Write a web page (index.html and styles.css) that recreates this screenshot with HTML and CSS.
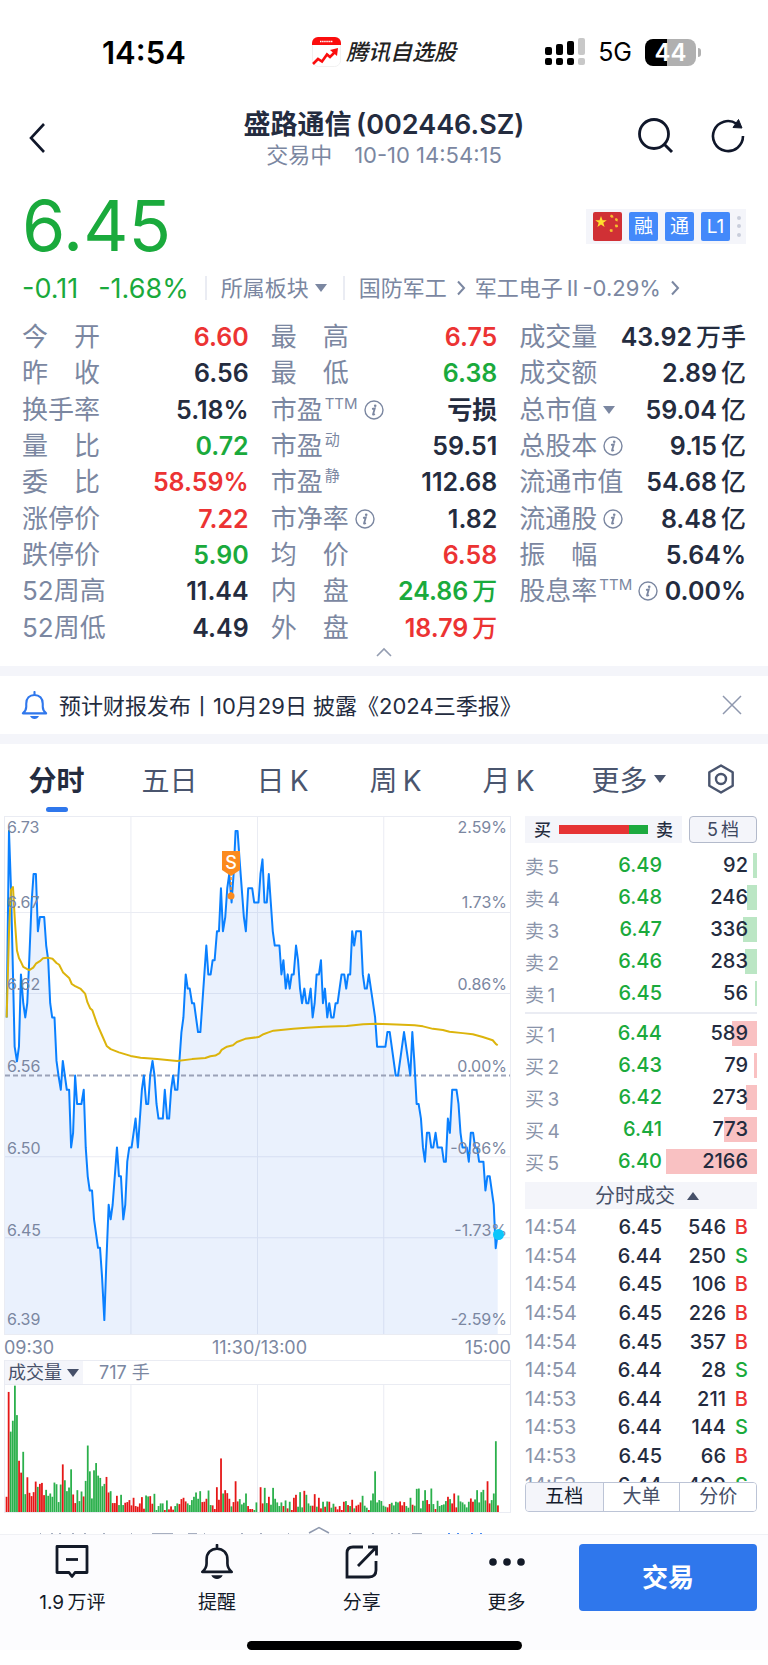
FILE: index.html
```html
<!DOCTYPE html>
<html lang="zh-CN">
<head>
<meta charset="utf-8">
<meta name="viewport" content="width=device-width, initial-scale=1">
<title>盛路通信 (002446.SZ)</title>
<link rel="stylesheet" href="styles.css">
</head>
<body>
<svg class="defs" aria-hidden="true">
  <symbol id="info" viewBox="0 0 20 20"><circle cx="10" cy="10" r="9" fill="none" stroke="currentColor" stroke-width="1.4"/><circle cx="11.2" cy="5.8" r="1.3" fill="currentColor"/><path d="M8 8.8l2.8-.5-1.8 6.2q-.1.6 1.9-.6" fill="none" stroke="currentColor" stroke-width="1.8"/></symbol>
  <symbol id="chev" viewBox="0 0 10 16"><path d="M2 1.500l6 6.500-6 6.500" fill="none" stroke="currentColor" stroke-width="2"/></symbol>
  <symbol id="bell" viewBox="0 0 36 38"><path d="M18 1v4M2.500 29.500h31c-3.500-3.200-4.500-5-4.500-9v-4c0-7-4.500-11.500-11-11.500S7 9.500 7 16.500v4c0 4-1 5.800-4.500 9z" fill="none" stroke="currentColor" stroke-width="2.800" stroke-linejoin="round" stroke-linecap="round"/><path d="M12 33h12q-2 4-6 4t-6-4z" fill="currentColor"/></symbol>
</svg>

<header class="status">
  <span class="clock">14:54</span>
  <span class="island">
    <svg width="29" height="30" viewBox="0 0 29 30" aria-hidden="true"><rect x=".5" y=".5" width="28" height="29" rx="6" fill="#fff" stroke="#f1f1f1"/><path d="M0 8V6a6 6 0 0 1 6-6h17a6 6 0 0 1 6 6v2z" fill="#fb0d0d"/><path d="M8 4.500h13" stroke="#fff" stroke-width="1.500" stroke-dasharray="1.500 .6"/><path d="M1 27l5-5 4 2.500 5-7 3 2.500 6-6" fill="none" stroke="#fb0d0d" stroke-width="2.600"/><path d="M18 13l8-2-1 8z" fill="#fb0d0d"/></svg>
    <span class="island-name">腾讯自选股</span>
  </span>
  <span class="radio">
    <svg width="40" height="28" viewBox="0 0 40 28" aria-hidden="true"><g fill="#000"><rect x="0" y="9" width="7" height="8" rx="2"/><rect x="11" y="6" width="7" height="11" rx="2"/><rect x="22" y="3" width="7" height="14" rx="2"/><rect x="0" y="20" width="7" height="7" rx="2"/><rect x="11" y="20" width="7" height="7" rx="2"/><rect x="22" y="20" width="7" height="7" rx="2"/></g><g fill="#c8c8c8"><rect x="33" y="0" width="7" height="17" rx="2"/><rect x="33" y="20" width="7" height="7" rx="2"/></g></svg>
    <span class="net">5G</span>
    <span class="battery">44</span>
  </span>
</header>

<nav class="titlebar">
  <button class="plain back" aria-label="返回"><svg width="18" height="32" viewBox="0 0 18 32"><path d="M16 2L3 16l13 14" fill="none" stroke="currentColor" stroke-width="2.600"/></svg></button>
  <div class="heading"><h1>盛路通信&thinsp;(002446.SZ)</h1><p>交易中&emsp;10-10 14:54:15</p></div>
  <div class="tools">
    <button class="plain" aria-label="搜索"><svg width="36" height="36" viewBox="0 0 36 36"><circle cx="16" cy="16" r="14.500" fill="none" stroke="currentColor" stroke-width="2.800"/><path d="M26 26l8 8" stroke="currentColor" stroke-width="3"/></svg></button>
    <button class="plain" aria-label="刷新"><svg width="36" height="36" viewBox="0 0 36 36"><path d="M33 18a15 15 0 1 1-6.500-12.300" fill="none" stroke="currentColor" stroke-width="2.600"/><path d="M28.500 1.500l3.500 8.500-9-.5z" fill="currentColor" stroke="currentColor"/></svg></button>
  </div>
</nav>

<main>
<section class="quote">
  <strong class="price">6.45</strong>
  <div class="badges">
    <svg width="29" height="29" viewBox="0 0 29 29" role="img" aria-label="中国"><rect width="29" height="29" rx="2" fill="#d03035"/><path d="M8 4l1.500 4.200h4.300l-3.500 2.600 1.300 4.200L8 12.400 4.400 15l1.300-4.200-3.500-2.600h4.300z" fill="#ffdf2e"/><g fill="#f5c02c"><path d="M18 2.500l2 1 .5 2-2.200.2-1.300-1.500zM23 6l1.800 1-.3 2.400-2-.6-.6-1.700zM22.500 12.500l2.200.2.3 2.300-2.200.5-1-1.700zM17.500 17l2.200.6-.3 2.300-2.300-.2-.5-1.700z"/></g></svg>
    <span class="badge">融</span><span class="badge">通</span><span class="badge">L1</span>
    <svg width="4" height="23" viewBox="0 0 4 23" aria-hidden="true"><g fill="#c9cedb"><circle cx="2" cy="3" r="2"/><circle cx="2" cy="11" r="2"/><circle cx="2" cy="20" r="2"/></g></svg>
  </div>
</section>
<section class="sector">
  <span class="chg">-0.11</span><span class="chg pct">-1.68%</span>
  <button class="plain cell">所属板块<i class="tri"></i></button>
  <div class="cell links"><a href="#a">国防军工</a><svg width="10" height="16"><use href="#chev"/></svg><a href="#b">军工电子&thinsp;II&thinsp;-0.29%</a><svg width="10" height="16"><use href="#chev"/></svg></div>
</section>

<section class="stats">
  <dl>
    <div><dt>今　开</dt><dd class="r">6.60</dd></div>
    <div><dt>昨　收</dt><dd>6.56</dd></div>
    <div><dt>换手率</dt><dd>5.18%</dd></div>
    <div><dt>量　比</dt><dd class="g">0.72</dd></div>
    <div><dt>委　比</dt><dd class="r">58.59%</dd></div>
    <div><dt>涨停价</dt><dd class="r">7.22</dd></div>
    <div><dt>跌停价</dt><dd class="g">5.90</dd></div>
    <div><dt>52周高</dt><dd>11.44</dd></div>
    <div><dt>52周低</dt><dd>4.49</dd></div>
  </dl>
  <dl>
    <div><dt>最　高</dt><dd class="r">6.75</dd></div>
    <div><dt>最　低</dt><dd class="g">6.38</dd></div>
    <div><dt>市盈<sup>TTM</sup><svg class="info"><use href="#info"/></svg></dt><dd>亏损</dd></div>
    <div><dt>市盈<sup>动</sup></dt><dd>59.51</dd></div>
    <div><dt>市盈<sup>静</sup></dt><dd>112.68</dd></div>
    <div><dt>市净率<svg class="info"><use href="#info"/></svg></dt><dd>1.82</dd></div>
    <div><dt>均　价</dt><dd class="r">6.58</dd></div>
    <div><dt>内　盘</dt><dd class="g">24.86<b>万</b></dd></div>
    <div><dt>外　盘</dt><dd class="r">18.79<b>万</b></dd></div>
  </dl>
  <dl>
    <div><dt>成交量</dt><dd>43.92<b>万手</b></dd></div>
    <div><dt>成交额</dt><dd>2.89<b>亿</b></dd></div>
    <div><dt>总市值<i class="tri"></i></dt><dd>59.04<b>亿</b></dd></div>
    <div><dt>总股本<svg class="info"><use href="#info"/></svg></dt><dd>9.15<b>亿</b></dd></div>
    <div><dt>流通市值</dt><dd>54.68<b>亿</b></dd></div>
    <div><dt>流通股<svg class="info"><use href="#info"/></svg></dt><dd>8.48<b>亿</b></dd></div>
    <div><dt>振　幅</dt><dd>5.64%</dd></div>
    <div><dt>股息率<sup>TTM</sup><svg class="info"><use href="#info"/></svg></dt><dd>0.00%</dd></div>
  </dl>
</section>
<button class="plain fold" aria-label="收起"><svg width="16" height="10" viewBox="0 0 16 10"><path d="M1 9l7-7 7 7" fill="none" stroke="currentColor" stroke-width="1.600"/></svg></button>

<section class="notice">
  <svg class="notice-bell" width="27" height="29"><use href="#bell"/></svg>
  <p>预计财报发布丨10月29日 披露《2024三季报》</p>
  <button class="plain" aria-label="关闭"><svg width="20" height="20" viewBox="0 0 20 20"><path d="M1 1l18 18M19 1L1 19" stroke="currentColor" stroke-width="1.500"/></svg></button>
</section>

<nav class="tabs">
  <button class="plain on">分时</button>
  <button class="plain">五日</button>
  <button class="plain">日&thinsp;K</button>
  <button class="plain">周&thinsp;K</button>
  <button class="plain">月&thinsp;K</button>
  <button class="plain">更多<i class="tri"></i></button>
  <button class="plain" aria-label="设置"><svg width="30" height="30" viewBox="0 0 30 30"><path d="M15 1.500l11.700 6.700v13.600L15 28.500 3.300 21.800V8.200z" fill="none" stroke="currentColor" stroke-width="2.400" stroke-linejoin="round"/><circle cx="15" cy="15" r="5" fill="none" stroke="currentColor" stroke-width="2.400"/></svg></button>
</nav>

<div class="board">
  <section class="charts">
    <div class="plot">
      <svg class="lines" viewBox="12 45 1520 1452" preserveAspectRatio="none" aria-label="分时走势">
        <path class="grid" d="M12 313H1532M12 541H1532M12 999H1532M12 1227H1532M391 45V1497M772 45V1497M1152 45V1497"/>
        <path class="area" id="area"/>
        <path class="dash" d="M12 771H1532"/>
        <polyline class="now" id="now" points="17,608 24,84 30,245 35,446 41,690 48,731 54,690 60,487 67,568 73,608 79,568 85,446 92,285 98,205 105,205 111,366 117,326 130,326 136,406 142,446 148,568 154,608 161,608 167,730 173,771 180,811 186,730 198,811 205,811 211,973 217,932 223,771 229,851 242,851 249,811 255,973 261,1054 267,1094 274,1094 280,1175 292,1255 298,1255 304,1335 311,1458 317,1297 324,1134 330,1175 336,1134 349,973 355,1054 361,1054 368,1175 374,1134 380,1013 386,973 393,973 405,892 412,973 424,811 430,771 437,851 443,851 449,771 456,730 462,771 468,851 474,892 487,892 493,811 500,892 506,892 512,811 518,771 524,811 531,811 537,730 543,650 549,608 556,487 562,527 568,527 575,568 581,568 593,649 600,649 612,487 618,406 624,487 631,487 637,447 643,447 650,366 656,366 662,245 668,366 675,326 681,245 687,205 694,285 700,205 706,84 712,84 718,164 731,326 737,366 744,245 756,245 762,285 775,285 781,205 787,164 793,285 800,285 806,205 812,285 818,366 824,406 838,406 844,487 850,447 857,527 863,487 869,527 875,487 881,487 888,406 894,447 900,527 906,568 913,527 919,568 925,568 932,527 938,608 944,568 950,487 957,487 963,447 969,568 975,527 982,608 988,568 994,608 1001,608 1007,568 1013,568 1025,487 1033,487 1039,527 1045,487 1051,487 1057,366 1063,406 1069,366 1083,366 1089,487 1095,527 1101,527 1107,487 1126,608 1132,690 1157,690 1163,649 1170,649 1188,771 1195,771 1213,649 1232,771 1238,649 1244,730 1251,851 1257,851 1264,892 1270,973 1276,1013 1282,932 1289,932 1295,973 1301,973 1308,932 1314,973 1327,973 1333,1013 1339,1013 1345,892 1351,932 1358,811 1371,811 1377,851 1383,932 1389,973 1402,973 1408,1013 1414,932 1421,932 1427,973 1433,973 1439,1013 1452,1013 1458,1094 1464,1054 1471,1054 1483,1134 1489,1256 1495,1215"/>
        <polyline class="avg" points="17,608 24,370 30,250 36,242 42,340 48,420 54,441 60,452 67,466 79,472 85,475 97,468 105,457 117,450 126,442 140,440 155,443 167,455 175,460 187,482 205,497 213,514 223,520 240,528 253,541 260,565 268,582 275,588 290,628 305,660 318,688 330,697 355,706 390,716 420,721 470,725 530,730 575,725 615,722 630,717 645,715 658,708 664,699 680,690 698,686 710,677 735,668 775,663 790,655 805,650 820,645 880,640 920,637 970,634 1040,632 1090,627 1130,626 1190,628 1245,630 1270,633 1300,640 1330,643 1350,648 1390,652 1420,655 1450,663 1480,672 1490,683 1495,686"/>
      </svg>
      <div class="scale">
        <div><span>6.73</span><span>2.59%</span></div>
        <div><span>6.67</span><span>1.73%</span></div>
        <div><span>6.62</span><span>0.86%</span></div>
        <div><span>6.56</span><span>0.00%</span></div>
        <div><span>6.50</span><span>-0.86%</span></div>
        <div><span>6.45</span><span>-1.73%</span></div>
        <div><span>6.39</span><span>-2.59%</span></div>
      </div>
      <svg class="sell" width="18" height="50" viewBox="0 0 18 50"><path d="M0 0h18v19l-9 6-9-6z" fill="#fb8a1e"/><text x="9" y="18" text-anchor="middle">S</text><path d="M9 26v16" stroke="#fb8a1e" stroke-width="1.500" stroke-dasharray="3 2"/><circle cx="9" cy="45" r="3.500" fill="#fb8a1e"/></svg>
      <i class="last"></i>
    </div>
    <div class="times"><span>09:30</span><span>11:30/13:00</span><span>15:00</span></div>
    <div class="vol-head"><button class="plain">成交量<i class="tri"></i></button><span>717 手</span></div>
    <svg class="volume" id="volume" viewBox="12 103 1520 384" preserveAspectRatio="none" aria-label="成交量"><path class="grid" d="M391 103V487M772 103V487M1152 103V487"/></svg>
  </section>

  <aside class="depth">
    <div class="depth-head">
      <div class="ratio"><span>买</span><i class="meter"></i><span>卖</span></div>
      <button class="level">5&thinsp;档</button>
    </div>
    <table class="book asks">
      <tr><th scope="row">卖&thinsp;5</th><td>6.49</td><td><i style="width:4px"></i><span>92</span></td></tr>
      <tr><th scope="row">卖&thinsp;4</th><td>6.48</td><td><i style="width:10px"></i><span>246</span></td></tr>
      <tr><th scope="row">卖&thinsp;3</th><td>6.47</td><td><i style="width:14px"></i><span>336</span></td></tr>
      <tr><th scope="row">卖&thinsp;2</th><td>6.46</td><td><i style="width:12px"></i><span>283</span></td></tr>
      <tr><th scope="row">卖&thinsp;1</th><td>6.45</td><td><i style="width:2px"></i><span>56</span></td></tr>
    </table>
    <hr class="split">
    <table class="book bids">
      <tr><th scope="row">买&thinsp;1</th><td>6.44</td><td><i style="width:25px"></i><span>589</span></td></tr>
      <tr><th scope="row">买&thinsp;2</th><td>6.43</td><td><i style="width:3px"></i><span>79</span></td></tr>
      <tr><th scope="row">买&thinsp;3</th><td>6.42</td><td><i style="width:11px"></i><span>273</span></td></tr>
      <tr><th scope="row">买&thinsp;4</th><td>6.41</td><td><i style="width:33px"></i><span>773</span></td></tr>
      <tr><th scope="row">买&thinsp;5</th><td>6.40</td><td><i style="width:91px"></i><span>2166</span></td></tr>
    </table>
    <button class="plain deals-head">分时成交<i class="tri up"></i></button>
    <div class="deals">
      <table>
        <tr><th scope="row">14:54</th><td>6.45</td><td>546</td><td class="r">B</td></tr>
        <tr><th scope="row">14:54</th><td>6.44</td><td>250</td><td class="g">S</td></tr>
        <tr><th scope="row">14:54</th><td>6.45</td><td>106</td><td class="r">B</td></tr>
        <tr><th scope="row">14:54</th><td>6.45</td><td>226</td><td class="r">B</td></tr>
        <tr><th scope="row">14:54</th><td>6.45</td><td>357</td><td class="r">B</td></tr>
        <tr><th scope="row">14:54</th><td>6.44</td><td>28</td><td class="g">S</td></tr>
        <tr><th scope="row">14:53</th><td>6.44</td><td>211</td><td class="r">B</td></tr>
        <tr><th scope="row">14:53</th><td>6.44</td><td>144</td><td class="g">S</td></tr>
        <tr><th scope="row">14:53</th><td>6.45</td><td>66</td><td class="r">B</td></tr>
        <tr><th scope="row">14:53</th><td>6.44</td><td>400</td><td class="g">S</td></tr>
      </table>
    </div>
    <div class="switch"><button class="on">五档</button><button>大单</button><button>分价</button></div>
  </aside>
</div>
<svg class="peek" width="768" height="12" viewBox="0 0 768 12" aria-hidden="true"><path d="M309 11l10-5.500L329 11" fill="none" stroke="#8f99ae" stroke-width="1.500"/><path d="M40 11.500h1M51 11.500h2M59 11.500h2M72 11.500h2M84 11.500h2M103 11.500h2M131 11.500h1M152 11.500h21M188 11.500h9M204 11.500h1M241 11.500h2M260 11.500h2M288 11.500h1M349 11.500h2M372 11.500h2M391 11.500h2M398 11.500h2M412 11.500h10" stroke="#a7afc0"/><path d="M448 11.500h2M457 11.500h2M471 11.500h2M480 11.500h2" stroke="#4c8df2"/></svg>
</main>

<footer class="dock">
  <div class="actions">
    <button class="plain"><svg width="36" height="36" viewBox="0 0 36 36"><path d="M3 2.500h30v26H21l-3 4-3-4H3z" fill="none" stroke="currentColor" stroke-width="2.800" stroke-linejoin="round"/><path d="M12 15.500h12" stroke="currentColor" stroke-width="2.800"/></svg><span>1.9&thinsp;万评</span></button>
    <button class="plain"><svg width="36" height="36" viewBox="0 0 36 38"><use href="#bell"/></svg>提醒</button>
    <button class="plain"><svg width="36" height="36" viewBox="0 0 36 36"><path d="M19 3H9Q3 3 3 9v24h22q7 0 7-7V17M24 3h8.500v8.500M32 3.500L14 22" fill="none" stroke="currentColor" stroke-width="2.800"/></svg>分享</button>
    <button class="plain"><svg width="36" height="36" viewBox="0 0 36 36"><g fill="currentColor"><circle cx="4" cy="18" r="3.800"/><circle cx="18" cy="18" r="3.800"/><circle cx="32" cy="18" r="3.800"/></g></svg>更多</button>
    <button class="trade">交易</button>
  </div>
  <i class="home"></i>
</footer>
<script src="chart.js"></script>
</body>
</html>
```
FILE: styles.css
```css
* { box-sizing: border-box; }
:root { --ink: #242c3f; --mute: #7b87a1; --soft: #f4f5fa; --line: #eaecf3; --green: #1aaa3c; --red: #ec3333; --blue: #2f77ec; }
body { margin: 0; background: #fff; color: var(--ink); font-family: Inter, "Noto Sans CJK SC", sans-serif; font-size: 18px; }
h1, p, dl, dd { margin: 0; }
a { color: inherit; text-decoration: none; }
button { font-family: inherit; cursor: pointer; }
table { border-collapse: collapse; table-layout: fixed; width: 100%; }
th, td { padding: 0; }
svg { flex: none; display: block; }
.defs { position: absolute; width: 0; height: 0; }
.plain { border: 0; background: none; padding: 0; color: inherit; font-size: inherit; }
.r { color: var(--red); }
.g { color: var(--green); }
.tri { display: inline-block; width: 0; height: 0; border: 6px solid transparent; border-top: 8px solid currentColor; border-bottom: 0; }
.tri.up { border-top: 0; border-bottom: 8px solid currentColor; }

.status { display: grid; grid-template-columns: 1fr auto 1fr; align-items: center; height: 104px; padding: 0 68px; color: #000; }
.clock { margin-left: 34px; font-size: 31px; font-weight: 600; }
.island { display: flex; align-items: center; gap: 5px; }
.island-name { font-size: 22px; font-weight: 500; font-style: italic; color: #222; line-height: 30px; }
.radio { display: flex; align-items: center; justify-content: flex-end; gap: 13px; }
.net { font-size: 25px; }
.battery { position: relative; width: 51px; height: 27px; border-radius: 8px; background: linear-gradient(90deg, #000 44%, #b0b0b0 44%); color: #fff; font-size: 24px; font-weight: 600; line-height: 27px; text-align: center; margin-right: 4px; }
.battery::after { content: ""; position: absolute; right: -5px; top: 9px; width: 3px; height: 9px; border-radius: 0 3px 3px 0; background: #b0b0b0; }

.titlebar { display: grid; grid-template-columns: 1fr auto 1fr; align-items: center; height: 68px; padding: 0 22px 0 28px; color: #10172a; }
.back { justify-self: start; }
.heading { text-align: center; margin-right: 6px; }
.heading h1 { font-size: 27px; line-height: 34px; font-weight: 600; color: var(--ink); }
.heading p { font-size: 22px; line-height: 26px; color: var(--mute); }
.tools { display: flex; justify-content: flex-end; gap: 36px; padding-bottom: 4px; }

.quote { display: flex; align-items: center; justify-content: space-between; height: 96px; padding: 12px 22px 0; }
.price { font-size: 70px; line-height: 84px; font-weight: 400; color: var(--green); }
.badges { display: flex; align-items: center; gap: 7px; padding: 3px 5px 3px 7px; background: var(--soft); }
.badge { width: 29px; height: 29px; border-radius: 2px; background: #4389fa; color: #fff; font-size: 19px; line-height: 29px; text-align: center; }
.sector { display: flex; align-items: center; height: 40px; padding: 0 22px; color: var(--mute); font-size: 22px; white-space: nowrap; }
.chg { color: var(--green); font-size: 27px; }
.pct { margin-left: 20px; }
.cell { display: flex; align-items: center; gap: 6px; border-left: 2px solid var(--line); padding-left: 14px; margin-left: 16px; line-height: 24px; }
.links { gap: 9px; }

.stats { display: grid; grid-template-columns: repeat(3, 1fr); gap: 22px; padding: 11px 22px 0; }
.stats dl { display: grid; grid-template-rows: repeat(9, 1fr); height: 327px; }
.stats dl > div { display: flex; justify-content: space-between; line-height: 36px; white-space: nowrap; }
dt { display: flex; align-items: center; color: var(--mute); font-size: 26px; }
dd { font-size: 25px; font-weight: 600; }
dd b { font-weight: 500; margin-left: 4px; }
dt sup { align-self: flex-start; font-size: 15px; line-height: 24px; margin-left: 2px; }
dt .tri { margin-left: 6px; }
.info { width: 20px; height: 20px; margin-left: 6px; }
.fold { display: flex; justify-content: center; width: 100%; height: 20px; padding-top: 1px; color: #949db1; }

.notice { display: flex; align-items: center; gap: 11px; padding: 0 26px 0 21px; height: 78px; border: solid var(--soft); border-width: 10px 0; font-size: 22px; }
.notice p { flex: 1; padding-bottom: 2px; }
.notice-bell { color: var(--blue); }
.notice button { color: #8f98ae; }

.tabs { display: grid; grid-template-columns: repeat(5, 113fr) 127fr 58fr; height: 72px; padding-right: 18px; font-size: 28px; color: #4a556e; }
.tabs button { display: flex; align-items: center; justify-content: center; gap: 6px; position: relative; padding-bottom: 2px; }
.tabs .on { font-weight: 700; color: var(--ink); }
.tabs .on::after { content: ""; position: absolute; left: 50%; bottom: 4px; width: 22px; height: 5px; margin-left: -11px; border-radius: 3px; background: var(--blue); }

.board { display: grid; grid-template-columns: 1fr 232px; gap: 14px; padding: 0 11px 0 4px; }
.plot { position: relative; height: 519px; border: 1px solid var(--line); }
.lines { width: 100%; height: 100%; }
.lines * { vector-effect: non-scaling-stroke; fill: none; stroke-linejoin: round; }
.grid { stroke: var(--line); stroke-width: 1; fill: none; vector-effect: non-scaling-stroke; }
.lines .area { fill: rgba(47, 119, 236, .1); }
.dash { stroke: #9aa2b8; stroke-width: 2; stroke-dasharray: 5 3; }
.now { stroke: #0a80ff; stroke-width: 2; }
.avg { stroke: #dcb40c; stroke-width: 2; }
.scale { position: absolute; inset: 0; display: grid; grid-template-rows: 19px 75px 82px 82px 82px 82px 1fr; padding-bottom: 6px; font-size: 16px; line-height: 18px; color: var(--mute); }
.scale div { display: flex; justify-content: space-between; align-items: flex-end; padding: 0 3px 0 2px; }
.sell { position: absolute; left: 44.800%; top: 6.500%; margin-left: -9px; }
.sell text { fill: #fff; font-size: 18px; font-weight: 500; }
.last { position: absolute; left: 97.600%; top: 80.600%; width: 11px; height: 11px; margin: -5px; border-radius: 50%; background: #0cc6fb; }
.times { display: flex; justify-content: space-between; font-size: 18px; line-height: 25px; color: var(--mute); }
.vol-head { display: flex; gap: 16px; height: 25px; border: 1px solid var(--line); line-height: 23px; color: var(--mute); font-size: 18px; }
.vol-head button { display: flex; align-items: center; gap: 5px; padding: 0 4px 0 3px; background: var(--soft); color: #465069; line-height: 22px; }
.volume { width: 100%; height: 128px; border: 1px solid var(--line); border-top: 0; }
.volume .up { fill: #e51717; }
.volume .down { fill: #2bb04c; }

.depth-head { display: flex; gap: 7px; height: 27px; }
.ratio { flex: 1; display: flex; align-items: center; gap: 8px; padding: 0 9px; background: var(--soft); font-size: 17px; line-height: 26px; font-weight: 500; }
.meter { flex: 1; height: 9px; background: linear-gradient(90deg, #e63434 79%, #1daa3f 79%); }
.level { width: 68px; padding: 0; border: 1px solid #b3bacb; border-radius: 4px; background: var(--soft); color: #3e4860; font-size: 18px; line-height: 24px; }
.book { font-size: 20px; }
.asks { margin-top: 6px; }
.book tr { height: 32px; }
.book th { width: 50px; text-align: left; font-weight: 400; font-size: 19px; color: #8a94aa; }
.book td { text-align: right; font-weight: 500; }
.book td:nth-child(2) { width: 87px; color: var(--green); }
.book td:nth-child(3) { position: relative; padding-right: 9px; }
.book i { position: absolute; right: 0; top: 4px; height: 25px; background: #bbe6c4; }
.book span { position: relative; }
.book.bids i { background: #f9c1c2; }
.split { height: 2px; margin: 3px 0; border: 0; background: var(--line); }
.deals-head { display: flex; align-items: center; justify-content: center; gap: 12px; width: 100%; height: 27px; margin-top: 5px; padding-left: 12px; background: var(--soft); color: #465069; font-size: 20px; line-height: 26px; }
.deals { height: 273px; padding-top: 4px; overflow: hidden; font-size: 20px; }
.deals table { height: 286px; }
.deals th { width: 60px; text-align: left; font-weight: 400; color: #8a94aa; }
.deals td { width: 77px; text-align: right; font-weight: 500; line-height: 24px; }
.deals td:nth-child(3) { width: 64px; }
.deals td:nth-child(4) { width: 31px; padding-right: 9px; }
.switch { display: grid; grid-template-columns: repeat(3, 1fr); height: 30px; border: 1px solid #bcc4d6; border-radius: 4px; overflow: hidden; }
.switch button { border: 0; padding: 0; background: #fff; font-size: 19px; line-height: 26px; color: #465069; }
.switch button + button { border-left: 1px solid #bcc4d6; }
.switch .on { background: var(--soft); color: #141b2d; }
.peek { margin-top: 9px; }

.dock { background: #fcfcfe; border-top: 1px solid #f0f1f5; color: #131a28; }
.actions { display: grid; grid-template-columns: repeat(4, 1fr) 178px; padding: 9px 11px 0 0; }
.actions .plain { display: flex; flex-direction: column; align-items: center; gap: 9px; font-size: 19px; line-height: 28px; }
.trade { height: 67px; padding: 0 0 4px; border: 0; border-radius: 4px; background: var(--blue); color: #fff; font-size: 26px; font-weight: 700; }
.home { display: block; width: 275px; height: 9px; margin: 24px auto 15px; border-radius: 5px; background: #000; }
```
FILE: chart.js
```js
// One entry per minute: positive = rising (red), negative = falling (green), 0 = midday break.
const volumes = [46,363,-243,-276,-382,-293,155,119,-182,-54,105,58,48,60,92,-76,85,88,51,-67,-49,-56,-46,-89,-84,-30,-83,144,-96,-63,-74,-129,53,27,-66,-33,-62,47,-94,-201,-123,-41,-126,-148,-110,-103,-78,-85,106,59,-63,27,27,49,-21,-52,-21,28,30,36,20,43,18,16,26,45,10,-50,-47,48,25,-55,-6,-18,-26,-26,6,-35,8,17,7,-18,-26,24,39,43,32,-26,-21,-36,-46,-59,-40,-63,30,31,40,-65,-21,20,9,75,37,162,-56,66,57,40,-17,30,93,32,-39,-23,-28,-56,18,9,9,-6,-29,0,75,26,-73,-27,46,-22,-73,-40,-29,-18,-29,18,-35,11,-31,6,43,52,-16,-60,-14,64,-52,-26,-19,19,54,-16,43,11,-31,16,-32,31,-13,-25,16,8,18,6,31,-33,21,-18,37,-11,19,22,29,-49,-19,-13,6,-35,-56,-123,-29,-36,-33,-19,-16,14,24,-28,-20,-31,-29,32,20,30,-18,-13,-43,22,-19,-70,-71,-11,-34,-66,36,24,-71,-24,9,-34,-18,-21,-23,-33,46,-39,26,56,14,-50,-32,-29,-23,-14,-31,41,31,-38,-66,-29,-60,-67,-35,93,26,-36,-56,-214,20];
const volume = document.getElementById('volume');
const step = (1495 - 16) / (volumes.length - 1);
volumes.forEach((v, i) => {
  const bar = document.createElementNS('http://www.w3.org/2000/svg', 'rect');
  const height = Math.abs(v);
  bar.setAttribute('x', (14 + i * step).toFixed(1));
  bar.setAttribute('y', 487 - height);
  bar.setAttribute('width', 5.4);
  bar.setAttribute('height', height);
  bar.setAttribute('class', v > 0 ? 'up' : 'down');
  volume.appendChild(bar);
});
// Shade the region under the price line.
const points = document.getElementById('now').getAttribute('points');
document.getElementById('area').setAttribute('d', 'M12,1497 L12,608 L' + points.split(' ').join(' L') + ' L1495,1497 Z');
```
